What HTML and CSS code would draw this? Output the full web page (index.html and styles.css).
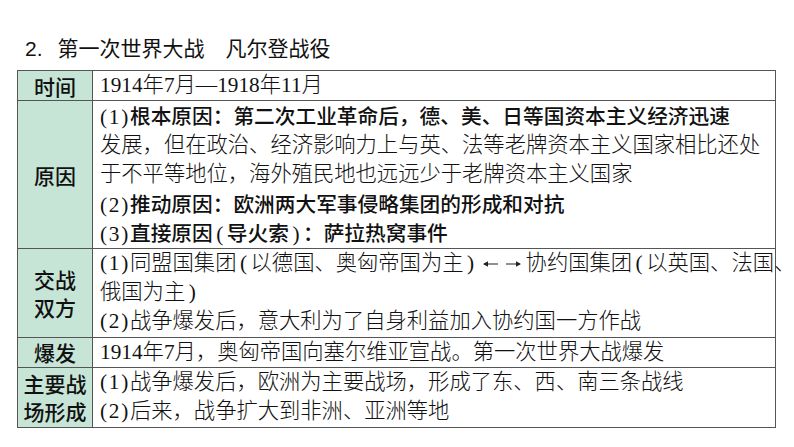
FILE: index.html
```html
<!DOCTYPE html>
<html lang="zh-CN">
<head>
<meta charset="utf-8">
<title>第一次世界大战</title>
<link rel="stylesheet" href="styles.css">
</head>
<body>
<div class="page">
  <h1 class="title"><span class="num">2.</span>第一次世界大战　凡尔登战役</h1>
  <table class="grid">
    <colgroup><col class="c-label"><col></colgroup>
    <tr>
      <th class="label">时间</th>
      <td class="cell"><div class="ln">1914年7月—1918年11月</div></td>
    </tr>
    <tr>
      <th class="label">原因</th>
      <td class="cell">
        <div class="ln"><span class="n">(1)</span><b>根本原因：第二次工业革命后，德、美、日等国资本主义经济迅速</b></div>
        <div class="ln">发展，但在政治、经济影响力上与英、法等老牌资本主义国家相比还处</div>
        <div class="ln">于不平等地位，海外殖民地也远远少于老牌资本主义国家</div>
        <div class="ln"><span class="n">(2)</span><b>推动原因：欧洲两大军事侵略集团的形成和对抗</b></div>
        <div class="ln"><span class="n">(3)</span><b>直接原因</b><span class="p">(</span><b>导火索</b><span class="p">)</span><b>：萨拉热窝事件</b></div>
      </td>
    </tr>
    <tr>
      <th class="label">交战<br>双方</th>
      <td class="cell">
        <div class="ln"><span class="n">(1)</span>同盟国集团<span class="p">(</span>以德国、奥匈帝国为主<span class="p">)</span><svg class="arrow" width="48" height="12" viewBox="0 0 48 12" aria-hidden="true"><path d="M6 6H20M28 6H42" stroke="#222" stroke-width="1.2" fill="none"/><path d="M5 6L10 3.2V8.8Z M43 6L38 3.2V8.8Z" fill="#222"/></svg>协约国集团<span class="p">(</span>以英国、法国、</div>
        <div class="ln">俄国为主<span class="p">)</span></div>
        <div class="ln"><span class="n">(2)</span>战争爆发后，意大利为了自身利益加入协约国一方作战</div>
      </td>
    </tr>
    <tr>
      <th class="label">爆发</th>
      <td class="cell"><div class="ln">1914年7月，奥匈帝国向塞尔维亚宣战。第一次世界大战爆发</div></td>
    </tr>
    <tr>
      <th class="label">主要战<br>场形成</th>
      <td class="cell">
        <div class="ln"><span class="n">(1)</span>战争爆发后，欧洲为主要战场，形成了东、西、南三条战线</div>
        <div class="ln"><span class="n">(2)</span>后来，战争扩大到非洲、亚洲等地</div>
      </td>
    </tr>
  </table>
</div>
</body>
</html>
```

FILE: styles.css
```css
html, body {
  margin: 0;
  padding: 0;
  background: #ffffff;
}

.page {
  width: 794px;
  height: 447px;
  overflow: hidden;
  padding-top: 32px;
  box-sizing: border-box;
}

.title {
  margin: 0 0 6px 25px;
  font-family: "Noto Sans CJK SC", "Liberation Sans", sans-serif;
  font-size: 21px;
  font-weight: 400;
  line-height: 30px;
  color: #111;
}

.title .num {
  font-family: "Liberation Sans", "Noto Sans CJK SC", sans-serif;
  margin-right: 15px;
}

.grid {
  margin-left: 17px;
  width: 759px;
  table-layout: fixed;
  border-collapse: collapse;
  border: 1px solid #333;
}

.c-label {
  width: 75px;
}

.grid th,
.grid td {
  border: 1px solid #555;
  padding: 0;
  vertical-align: middle;
}

.label {
  background: #c7e5d7;
  font-family: "Noto Sans CJK SC", sans-serif;
  font-size: 21px;
  font-weight: 500;
  line-height: 28px;
  color: #111;
  text-align: center;
  white-space: nowrap;
}

.cell {
  padding-left: 7px !important;
  font-family: "Liberation Serif", "Noto Sans CJK SC", serif;
  font-size: 21.3px;
  font-weight: 300;
  color: #111;
  text-align: left;
  white-space: nowrap;
  overflow: visible;
}

.ln {
  height: 29.3px;
  line-height: 29.3px;
}

.cell b {
  font-family: "Noto Sans CJK SC", sans-serif;
  font-size: 20.7px;
  font-weight: 500;
}

.n {
  letter-spacing: 1.7px;
}

.p {
  padding: 0 3.5px;
}

.arrow {
  vertical-align: middle;
  position: relative;
  top: -1px;
}
```
